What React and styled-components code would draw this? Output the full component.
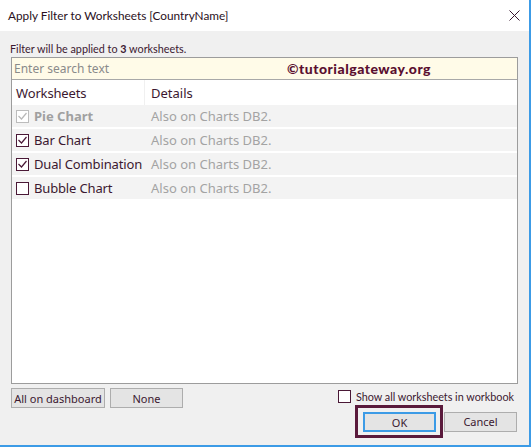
import styled, { createGlobalStyle } from "styled-components";

const GlobalStyle = createGlobalStyle`
  html, body {
    margin: 0;
    padding: 0;
    background: #f0f0f0;
  }
  body {
    font-family: "Noto Sans", "Open Sans", sans-serif;
    color: #3b1830;
  }
`;

const Window = styled.div`
  width: 531px;
  height: 447px;
  box-sizing: border-box;
  border-right: 2px solid #3c9be6;
  border-bottom: 2px solid #3c9be6;
  background: #f0f0f0;
  display: flex;
  flex-direction: column;
`;

const TitleBar = styled.div`
  height: 31px;
  background: #fff;
  display: flex;
  align-items: center;
  justify-content: space-between;
  padding: 0 9px 0 8px;
  font-family: "Lato", "Noto Sans", sans-serif;
  font-size: 11.8px;
  color: #2a1022;
`;

const Body = styled.div`
  flex: 1;
  display: flex;
  flex-direction: column;
  padding: 9px 11px 0 10px;
`;

const Info = styled.div`
  font-family: "Lato", "Noto Sans", sans-serif;
  font-size: 10.8px;
  height: 17px;
  line-height: 17px;
  b {
    font-weight: 700;
  }
`;

const Panel = styled.div`
  margin-left: 1px;
  height: 325px;
  border: 1px solid #9c9c9c;
  background: #fff;
  display: flex;
  flex-direction: column;
`;

const Search = styled.div`
  height: 21px;
  background: #fffbe8;
  border-bottom: 1px solid #a8a8a8;
  display: flex;
  align-items: center;
  padding-left: 2px;
  font-size: 12px;
  color: #8a8a8a;
`;

const Watermark = styled.span`
  margin-left: 178px;
  font-family: "Lato", "Open Sans", sans-serif;
  font-weight: 900;
  font-size: 14px;
  letter-spacing: 0.5px;
  color: #5a0f30;
`;

const Row = styled.div`
  display: grid;
  grid-template-columns: 133px 1fr;
  height: ${(p) => (p.$header ? 25 : 22)}px;
  margin-bottom: ${(p) => (p.$header ? 0 : 2)}px;
  align-items: center;
  background: ${(p) => (p.$header ? "#fff" : "#f3f3f3")};
  font-size: 13px;
`;

const NameCell = styled.div`
  display: flex;
  align-items: center;
  gap: 5px;
  padding-left: 4px;
  height: 100%;
  white-space: nowrap;
  letter-spacing: ${(p) => (p.$disabled ? 0 : -0.15)}px;
  color: ${(p) => (p.$disabled ? "#a0a0a0" : "#3b1830")};
  font-weight: ${(p) => (p.$disabled ? 700 : 400)};
  border-right: ${(p) => (p.$header ? "1px solid #f0f0f0" : "none")};
`;

const DetailCell = styled.div`
  padding-left: 6px;
  color: ${(p) => (p.$header ? "#3b1830" : "#a3a3a3")};
`;

const Box = styled.span`
  width: 11px;
  height: 11px;
  flex: none;
  border: 1px solid ${(p) => (p.$disabled ? "#bcbcbc" : "#4a1836")};
  background: #fff;
  display: flex;
  align-items: center;
  justify-content: center;
`;

const Footer = styled.div`
  display: flex;
  justify-content: space-between;
  padding: 4px 0 0 1px;
`;

const Buttons = styled.div`
  display: flex;
  gap: 5px;
  align-items: flex-start;
`;

const Button = styled.button`
  height: 20px;
  width: ${(p) => p.$w}px;
  padding: 0;
  border: 1px solid #adadad;
  background: #e4e4e4;
  font-family: "Noto Sans", "Open Sans", sans-serif;
  font-size: 11px;
  color: #3b1830;
  ${(p) => p.$primary && "border: 2px solid #3c9be6;"}
`;

const Right = styled.div`
  display: flex;
  flex-direction: column;
  align-items: flex-end;
  gap: 2px;
`;

const ShowAll = styled.label`
  display: flex;
  align-items: center;
  gap: 5px;
  font-family: "Lato", "Noto Sans", sans-serif;
  font-size: 10.8px;
  margin-right: 4px;
  height: 14px;
  padding-top: 1px;
`;

const ActionRow = styled.div`
  display: flex;
  align-items: center;
  gap: 1px;
  margin-right: 1px;
`;

const Highlight = styled.div`
  border: 3px solid #5a1a3c;
  padding: 4px 4px 3px 5px;
  display: flex;
`;

const Check = ({ checked, disabled }) => (
  <Box $disabled={disabled}>
    {checked && (
      <svg width="9" height="8" viewBox="0 0 9 8">
        <path
          d="M0.5 4 L3.5 7 L8.5 1"
          fill="none"
          stroke={disabled ? "#b8b8b8" : "#4a1836"}
          strokeWidth="1.2"
        />
      </svg>
    )}
  </Box>
);

const rows = [
  { name: "Pie Chart", checked: true, disabled: true },
  { name: "Bar Chart", checked: true },
  { name: "Dual Combination", checked: true },
  { name: "Bubble Chart", checked: false },
];

export default function App() {
  return (
    <>
      <GlobalStyle />
      <Window>
        <TitleBar>
          <span>Apply Filter to Worksheets [CountryName]</span>
          <svg width="11" height="11" viewBox="0 0 11 11">
            <path d="M0.5 0.5 L10.5 10.5 M10.5 0.5 L0.5 10.5" stroke="#3b1830" strokeWidth="1" />
          </svg>
        </TitleBar>
        <Body>
          <Info>
            Filter will be applied to <b>3</b> worksheets.
          </Info>
          <Panel>
            <Search>
              Enter search text
              <Watermark>©tutorialgateway.org</Watermark>
            </Search>
            <Row $header>
              <NameCell $header>Worksheets</NameCell>
              <DetailCell $header>Details</DetailCell>
            </Row>
            {rows.map((r) => (
              <Row key={r.name}>
                <NameCell $disabled={r.disabled}>
                  <Check checked={r.checked} disabled={r.disabled} />
                  {r.name}
                </NameCell>
                <DetailCell>Also on Charts DB2.</DetailCell>
              </Row>
            ))}
          </Panel>
          <Footer>
            <Buttons>
              <Button $w={94}>All on dashboard</Button>
              <Button $w={73}>None</Button>
            </Buttons>
            <Right>
              <ShowAll>
                <Check checked={false} />
                Show all worksheets in workbook
              </ShowAll>
              <ActionRow>
                <Highlight>
                  <Button $w={73} $primary>
                    OK
                  </Button>
                </Highlight>
                <Button $w={73}>Cancel</Button>
              </ActionRow>
            </Right>
          </Footer>
        </Body>
      </Window>
    </>
  );
}
